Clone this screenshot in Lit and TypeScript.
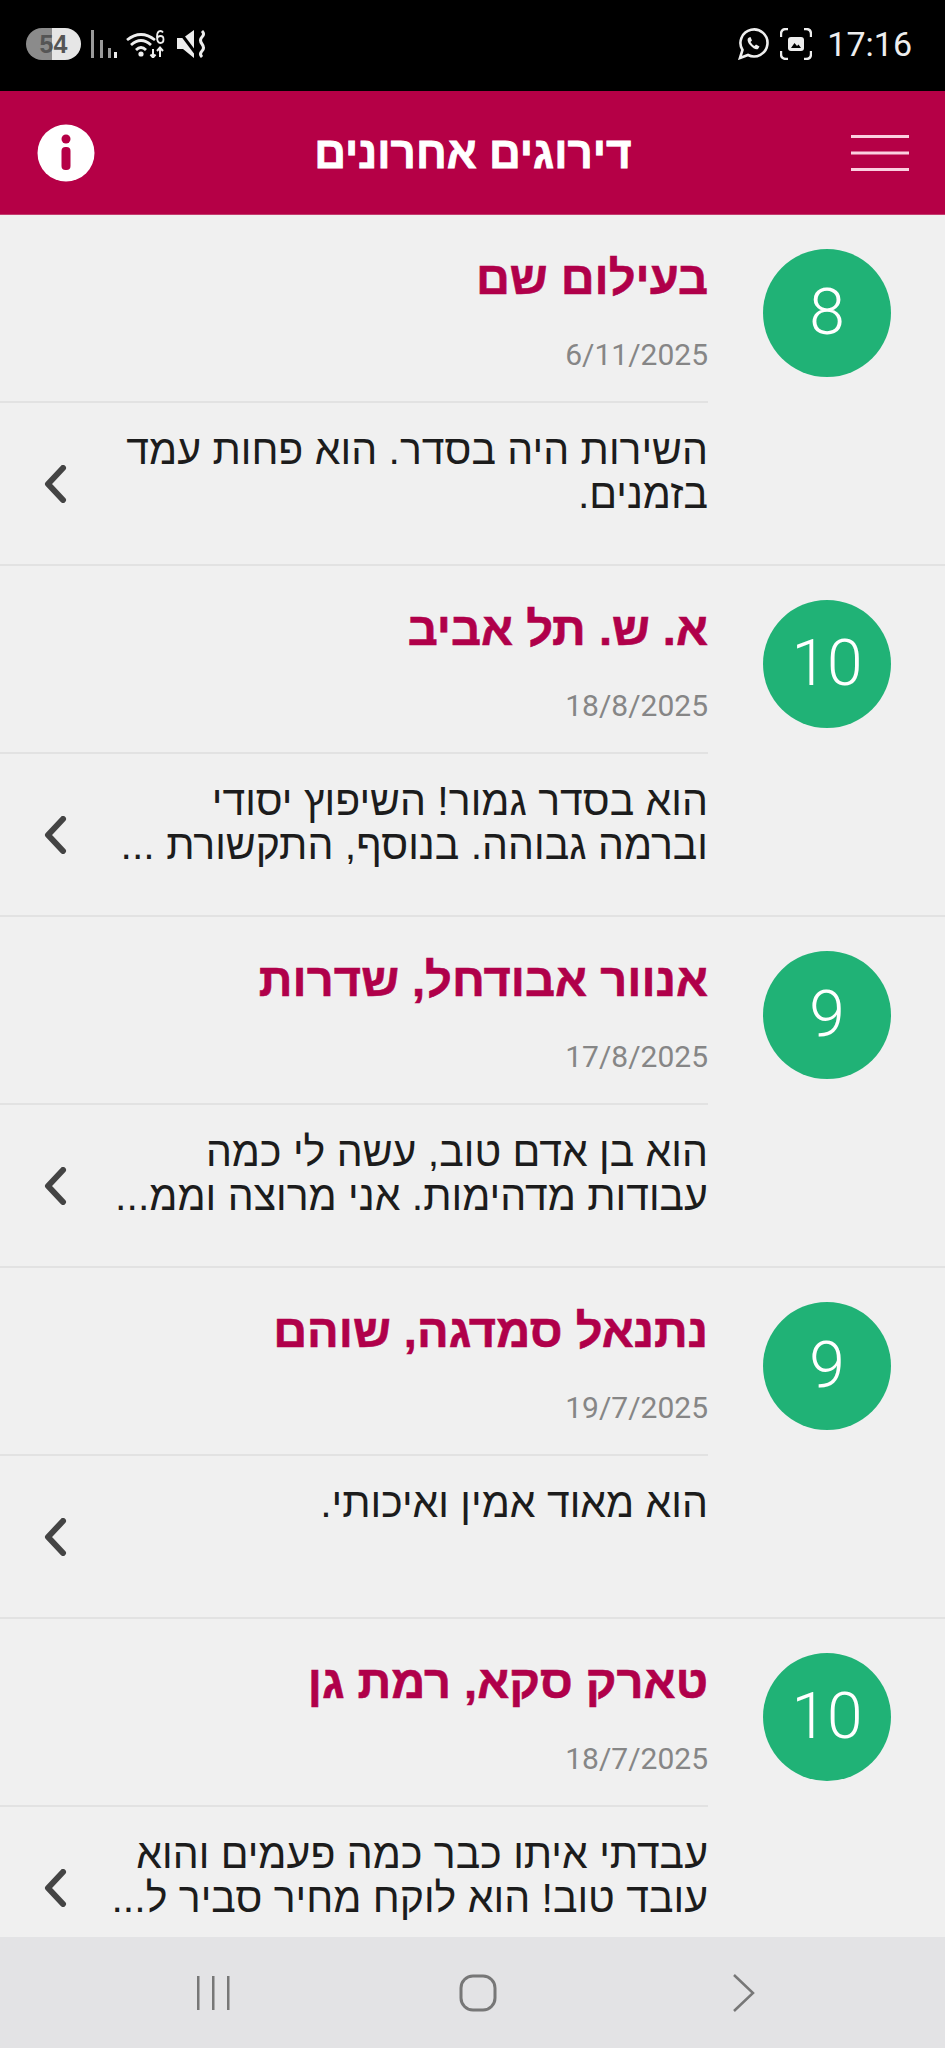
import { LitElement, html, css, svg } from 'lit';
import { customElement } from 'lit/decorators.js';

const REVIEWS = [
  { score: 8, name: 'בעילום שם', date: '6/11/2025', lines: ['השירות היה בסדר. הוא פחות עמד', 'בזמנים.'] },
  { score: 10, name: 'א. ש. תל אביב', date: '18/8/2025', lines: ['הוא בסדר גמור! השיפוץ יסודי', 'וברמה גבוהה. בנוסף, התקשורת ...'] },
  { score: 9, name: 'אנוור אבודחל, שדרות', date: '17/8/2025', lines: ['הוא בן אדם טוב, עשה לי כמה', 'עבודות מדהימות. אני מרוצה וממ...'] },
  { score: 9, name: 'נתנאל סמדגה, שוהם', date: '19/7/2025', lines: ['הוא מאוד אמין ואיכותי.'] },
  { score: 10, name: 'טארק סקא, רמת גן', date: '18/7/2025', lines: ['עבדתי איתו כבר כמה פעמים והוא', 'עובד טוב! הוא לוקח מחיר סביר ל...'] },
];

const icon = (w: number, h: number, body: unknown) =>
  html`<svg width=${w} height=${h} viewBox="0 0 ${w} ${h}">${body}</svg>`;

@customElement('app-root')
export class AppRoot extends LitElement {
  static styles = css`
    :host {
      display: block;
      width: 945px;
      height: 2048px;
      overflow: hidden;
      background: #f0f0f0;
      font-family: 'Liberation Sans', 'DejaVu Sans', sans-serif;
    }
    .page {
      display: flex;
      flex-direction: column;
      height: 100%;
    }
    .status {
      flex: none;
      height: 91px;
      background: #000;
      color: #eee;
      display: flex;
      align-items: center;
      justify-content: space-between;
      padding: 0 33px 3px 26px;
      box-sizing: border-box;
    }
    .status-group {
      display: flex;
      align-items: center;
    }
    .pill {
      width: 55px;
      height: 32px;
      border-radius: 16px;
      background: linear-gradient(to right, #8b8b8b 0 47%, #e6e6e6 47% 100%);
      color: #555;
      font-weight: 700;
      font-size: 25px;
      line-height: 32px;
      text-align: center;
      margin-right: 10px;
    }
    .time {
      font-family: 'Roboto', sans-serif;
      font-size: 34px;
      margin-left: 15px;
    }
    .bar {
      flex: none;
      height: 124px;
      background: #b50046;
      border-bottom: 1px solid #c43c6e;
      box-sizing: border-box;
      display: flex;
      align-items: center;
      justify-content: space-between;
      padding: 0 36px 0 37px;
    }
    .bar-title {
      color: #fff;
      font-size: 44px;
      font-weight: 700;
      direction: rtl;
      -webkit-text-stroke: 0.8px #fff;
    }
    .list {
      flex: 1;
      min-height: 0;
      overflow: hidden;
      direction: rtl;
    }
    .row {
      height: 351px;
      box-sizing: border-box;
      border-bottom: 2px solid #e2e2e2;
      display: flex;
      padding-top: 34px;
    }
    .score {
      flex: none;
      width: 128px;
      height: 128px;
      border-radius: 50%;
      background: #20b276;
      color: #fff;
      font-family: 'Roboto', sans-serif;
      font-weight: 300;
      font-size: 64px;
      line-height: 128px;
      text-align: center;
      margin: 0 54px 0 55px;
    }
    .body {
      flex: 1;
      min-width: 0;
    }
    .name {
      color: #b0004a;
      font-size: 47px;
      font-weight: 700;
      line-height: 54px;
      margin-top: 2px;
      -webkit-text-stroke: 0.6px #b0004a;
    }
    .date {
      color: #868686;
      font-family: 'Roboto', sans-serif;
      font-size: 30px;
      line-height: 36px;
      margin-top: 32px;
      direction: ltr;
      text-align: right;
    }
    .rule {
      height: 2px;
      background: #e2e2e2;
      margin-top: 28px;
    }
    .bottom {
      display: flex;
      align-items: center;
      height: 161px;
    }
    .text {
      flex: 1;
      min-width: 0;
      color: #1c1c1c;
      font-size: 41px;
      line-height: 44px;
      align-self: flex-start;
      padding-top: 25px;
    }
    .text div {
      white-space: nowrap;
    }
    .chev {
      flex: none;
      width: 24px;
      margin-left: 43px;
      display: flex;
    }
    .nav {
      flex: none;
      height: 111px;
      background: #e3e3e5;
      display: grid;
      grid-template-columns: 1fr 1fr 1fr;
      align-items: center;
      justify-items: center;
      padding: 0 68px 0 80px;
      box-sizing: border-box;
    }
    .nav svg {
      display: block;
    }
    .gap-10 {
      width: 10px;
    }
    .gap-9 {
      width: 9px;
    }
  `;

  render() {
    return html`
      <div class="page">
        <div class="status">
          <div class="status-group">
            <div class="pill">54</div>
            ${icon(26, 28, svg`<g fill="#9a9a9a"><rect x="0" y="0" width="3" height="28"/><rect x="9" y="10" width="3" height="18"/><rect x="17" y="18" width="3" height="10"/></g><rect x="23" y="22" width="3.500" height="6" fill="#eee"/>`)}
            <span class="gap-9"></span>
            ${icon(40, 28, svg`<g fill="none" stroke="#eee" stroke-width="2.800"><path d="M1 10 Q15 -1 29 10"/><path d="M5 15 Q15 6 25 15"/><path d="M10 20 Q15 15 20 20"/></g><circle cx="15" cy="24" r="2.600" fill="#eee"/><path d="M27 19v8M24.500 24.500L27 27.500L29.500 24.500M34 27v-9M31 21L34 17.500L37 21" fill="none" stroke="#eee" stroke-width="2"/><path d="M37 2.500q-1-1.500-2.500-1.500q-3.500 0-3.500 6q0 6 3.500 6q3 0 3-3.500t-3-3.500q-3 0-3.500 3" fill="none" stroke="#eee" stroke-width="1.800"/>`)}
            <span class="gap-10"></span>
            ${icon(30, 28, svg`<path d="M1 8h6l11-8v28L7 19H1z" fill="#eee"/><path d="M3 1L21 25" stroke="#000" stroke-width="3"/><path d="M26 1q3 3 0 6t0 7 0 7 0 6" fill="none" stroke="#eee" stroke-width="3"/>`)}
          </div>
          <div class="status-group">
            ${icon(32, 32, svg`<path d="M2 30l2.500-8A13.500 13.500 0 1 1 10 27z" fill="none" stroke="#eee" stroke-width="2.600"/><path d="M11 9.500c-2 1-2 4 1 7.500s6 5 8 4l1.500-2.500-3.500-2-1.500 1.500c-2-1-3-2.500-4-4l1.500-1.500-1.500-3.500z" fill="#eee"/>`)}
            <span class="gap-10"></span>
            ${icon(32, 32, svg`<path d="M1 9V6q0-5 5-5h2M24 1h2q5 0 5 5v3M31 23v3q0 5-5 5h-2M8 31H6q-5 0-5-5v-3" fill="none" stroke="#eee" stroke-width="2.400"/><rect x="8" y="9" width="16" height="14" rx="3" fill="#eee"/><path d="M11 20l3.500-5 2.500 3 1.500-1.500 2.500 3.500z" fill="#000"/>`)}
            <span class="time">17:16</span>
          </div>
        </div>

        <div class="bar">
          ${icon(58, 58, svg`<circle cx="29" cy="29" r="28.500" fill="#fff"/><circle cx="29" cy="15" r="4.500" fill="#b50046"/><rect x="24.500" y="23" width="9" height="23" rx="4" fill="#b50046"/>`)}
          <div class="bar-title">דירוגים אחרונים</div>
          ${icon(58, 38, svg`<g fill="#fbd0e0"><rect y="1" width="58" height="3"/><rect y="17.500" width="58" height="3"/><rect y="34" width="58" height="3"/></g>`)}
        </div>

        <div class="list">
          ${REVIEWS.map(
            (r) => html`
              <div class="row">
                <div class="score">${r.score}</div>
                <div class="body">
                  <div class="name">${r.name}</div>
                  <div class="date">${r.date}</div>
                  <div class="rule"></div>
                  <div class="bottom">
                    <div class="text">${r.lines.map((l) => html`<div>${l}</div>`)}</div>
                    <div class="chev">
                      ${icon(24, 38, svg`<path d="M20 3L5 19L20 35" fill="none" stroke="#444" stroke-width="6" stroke-linecap="round" stroke-linejoin="round"/>`)}
                    </div>
                  </div>
                </div>
              </div>
            `
          )}
        </div>

        <div class="nav">
          ${icon(34, 36, svg`<g fill="#777"><rect x="1" y="1" width="2.500" height="34"/><rect x="16" y="1" width="2.500" height="34"/><rect x="31" y="1" width="2.500" height="34"/></g>`)}
          ${icon(38, 38, svg`<rect x="2" y="2" width="34" height="34" rx="12" fill="none" stroke="#777" stroke-width="3"/>`)}
          ${icon(26, 40, svg`<path d="M3 2L22 20L3 38" fill="none" stroke="#777" stroke-width="2.500"/>`)}
        </div>
      </div>
    `;
  }
}
